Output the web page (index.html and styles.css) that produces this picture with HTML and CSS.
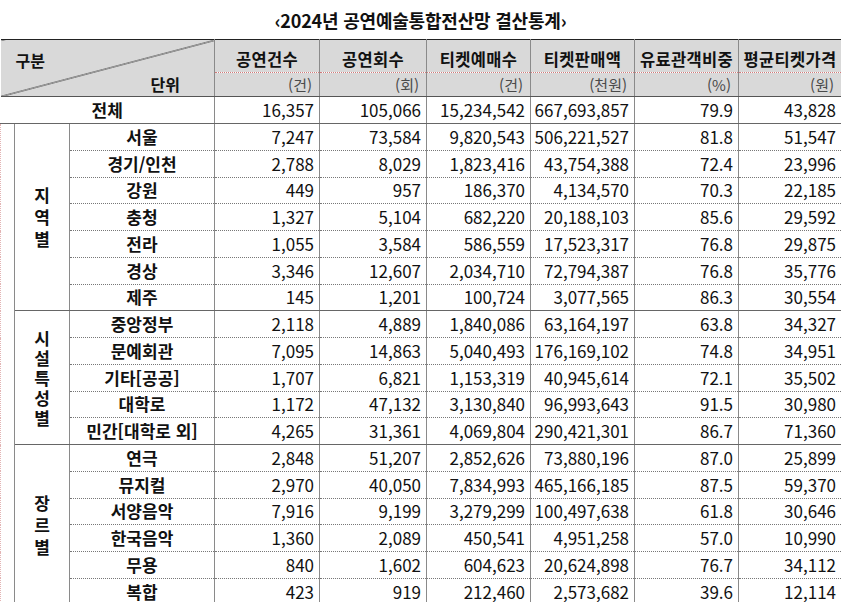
FILE: index.html
```html
<!DOCTYPE html>
<html lang="ko">
<head>
<meta charset="utf-8">
<title>2024년 공연예술통합전산망 결산통계</title>
<link rel="stylesheet" href="styles.css">
</head>
<body>
<div class="page">
  <h1 class="title">‹2024년 공연예술통합전산망 결산통계›</h1>
  <table class="stats">
    <colgroup>
      <col class="c-sliver"><col class="c-group"><col class="c-item">
      <col class="c-d1"><col class="c-d2"><col class="c-d3"><col class="c-d4"><col class="c-d5"><col class="c-d6">
    </colgroup>
    <thead>
      <tr class="h1">
        <td class="corner" colspan="3" rowspan="2">
          <div class="corner-in"><span class="gubun">구분</span><span class="danwi">단위</span></div>
        </td>
        <th>공연건수</th><th>공연회수</th><th>티켓예매수</th><th>티켓판매액</th><th>유료관객비중</th><th>평균티켓가격</th>
      </tr>
      <tr class="h2">
        <td class="unit">(건)</td><td class="unit">(회)</td><td class="unit">(건)</td><td class="unit">(천원)</td><td class="unit">(%)</td><td class="unit">(원)</td>
      </tr>
    </thead>
    <tbody>
      <tr class="total">
        <td class="total-label" colspan="3">전체</td>
        <td>16,357</td><td>105,066</td><td>15,234,542</td><td>667,693,857</td><td>79.9</td><td>43,828</td>
      </tr>
      <tr>
        <td class="sliver" rowspan="18"></td>
        <td class="group" rowspan="7">지<br>역<br>별</td>
        <td class="item">서울</td><td>7,247</td><td>73,584</td><td>9,820,543</td><td>506,221,527</td><td>81.8</td><td>51,547</td>
      </tr>
      <tr><td class="item">경기/인천</td><td>2,788</td><td>8,029</td><td>1,823,416</td><td>43,754,388</td><td>72.4</td><td>23,996</td></tr>
      <tr><td class="item">강원</td><td>449</td><td>957</td><td>186,370</td><td>4,134,570</td><td>70.3</td><td>22,185</td></tr>
      <tr><td class="item">충청</td><td>1,327</td><td>5,104</td><td>682,220</td><td>20,188,103</td><td>85.6</td><td>29,592</td></tr>
      <tr><td class="item">전라</td><td>1,055</td><td>3,584</td><td>586,559</td><td>17,523,317</td><td>76.8</td><td>29,875</td></tr>
      <tr><td class="item">경상</td><td>3,346</td><td>12,607</td><td>2,034,710</td><td>72,794,387</td><td>76.8</td><td>35,776</td></tr>
      <tr class="last"><td class="item">제주</td><td>145</td><td>1,201</td><td>100,724</td><td>3,077,565</td><td>86.3</td><td>30,554</td></tr>
      <tr>
        <td class="group tight" rowspan="5">시<br>설<br>특<br>성<br>별</td>
        <td class="item">중앙정부</td><td>2,118</td><td>4,889</td><td>1,840,086</td><td>63,164,197</td><td>63.8</td><td>34,327</td>
      </tr>
      <tr><td class="item">문예회관</td><td>7,095</td><td>14,863</td><td>5,040,493</td><td>176,169,102</td><td>74.8</td><td>34,951</td></tr>
      <tr><td class="item">기타[공공]</td><td>1,707</td><td>6,821</td><td>1,153,319</td><td>40,945,614</td><td>72.1</td><td>35,502</td></tr>
      <tr><td class="item">대학로</td><td>1,172</td><td>47,132</td><td>3,130,840</td><td>96,993,643</td><td>91.5</td><td>30,980</td></tr>
      <tr class="last"><td class="item">민간[대학로 외]</td><td>4,265</td><td>31,361</td><td>4,069,804</td><td>290,421,301</td><td>86.7</td><td>71,360</td></tr>
      <tr>
        <td class="group" rowspan="6">장<br>르<br>별</td>
        <td class="item">연극</td><td>2,848</td><td>51,207</td><td>2,852,626</td><td>73,880,196</td><td>87.0</td><td>25,899</td>
      </tr>
      <tr><td class="item">뮤지컬</td><td>2,970</td><td>40,050</td><td>7,834,993</td><td>465,166,185</td><td>87.5</td><td>59,370</td></tr>
      <tr><td class="item">서양음악</td><td>7,916</td><td>9,199</td><td>3,279,299</td><td>100,497,638</td><td>61.8</td><td>30,646</td></tr>
      <tr><td class="item">한국음악</td><td>1,360</td><td>2,089</td><td>450,541</td><td>4,951,258</td><td>57.0</td><td>10,990</td></tr>
      <tr><td class="item">무용</td><td>840</td><td>1,602</td><td>604,623</td><td>20,624,898</td><td>76.7</td><td>34,112</td></tr>
      <tr class="last"><td class="item">복합</td><td>423</td><td>919</td><td>212,460</td><td>2,573,682</td><td>39.6</td><td>12,114</td></tr>
    </tbody>
  </table>
</div>
</body>
</html>
```

FILE: styles.css
```css
html, body {
  margin: 0;
  padding: 0;
  background: #ffffff;
}

.page {
  width: 841px;
  height: 602px;
  overflow: hidden;
  font-family: "Noto Sans CJK KR", "Noto Sans", sans-serif;
  color: #111;
}

.title {
  margin: 0;
  height: 39px;
  display: flex;
  align-items: center;
  justify-content: center;
  font-size: 18px;
  font-weight: 700;
  color: #111;
  letter-spacing: -0.2px;
}

.stats {
  border-collapse: collapse;
  table-layout: fixed;
  width: 841px;
}

.c-sliver { width: 14px; }
.c-group { width: 55px; }
.c-item { width: 145px; }
.c-d1 { width: 105px; }
.c-d2 { width: 107px; }
.c-d3 { width: 104px; }
.c-d4 { width: 104px; }
.c-d5 { width: 104px; }
.c-d6 { width: 103px; }

.stats td, .stats th {
  padding: 0 5px 0 0;
  border-left: 1px solid #8a8a8a;
  border-right: 1px solid #8a8a8a;
  text-align: right;
  vertical-align: middle;
  font-size: 17px;
  line-height: 20px;
  white-space: nowrap;
  overflow: hidden;
}

/* header */
.stats thead tr.h1 { height: 33px; }
.stats thead tr.h2 { height: 24px; }

.stats thead th, .stats thead td {
  background: #d9d9d9;
}

.stats tr.h1 th, .stats tr.h1 td {
  border-top: 1px solid #222;
}

.stats th {
  text-align: center;
  font-weight: 700;
  font-size: 16.5px;
  padding: 5px 0 0 0;
  color: #111;
  border-bottom: 1px dotted #d07a7a;
  letter-spacing: 0.3px;
}

.stats td.unit {
  font-size: 15px;
  color: #4a4a4a;
  padding-right: 7px;
  border-bottom: 1px solid #555;
}

.stats td.corner {
  padding: 0;
  border-left: none;
  border-bottom: 1px solid #555;
  background:
    linear-gradient(to bottom right, transparent calc(50% - 0.8px), #333 50%, transparent calc(50% + 0.8px)),
    #d9d9d9;
}

.corner-in {
  height: 56px;
  display: flex;
  flex-direction: column;
  justify-content: space-between;
  font-weight: 700;
  font-size: 16px;
}

.gubun {
  align-self: flex-start;
  padding: 10px 0 0 15px;
  line-height: 20px;
}

.danwi {
  align-self: flex-end;
  padding: 0 34px 2px 0;
  line-height: 20px;
}

/* total */
.stats tr.total { height: 27px; }
.stats tr.total td {
  border-bottom: 1px solid #666;
}
.stats td.total-label {
  text-align: center;
  font-weight: 700;
  font-size: 17px;
  padding: 0;
  border-left: none;
}

/* body rows */
.stats tbody tr { height: 26.75px; }

.stats tbody td {
  border-bottom: 1px dotted #777;
}

.stats tbody tr.last td {
  border-bottom: 1px solid #666;
}

.stats td.sliver {
  padding: 0;
  border-left: 1px dotted #e3b4b4;
  border-top: 1px dotted #d08a8a;
  border-bottom: none;
  border-right: 1px solid #8a8a8a;
}

.stats td.group {
  text-align: center;
  padding: 0;
  font-weight: 700;
  font-size: 17px;
  line-height: 22px;
  border-bottom: 1px solid #666;
}

.stats td.group.tight {
  line-height: 20px;
}

.stats td.item {
  text-align: center;
  padding: 0;
  font-weight: 700;
  font-size: 17px;
}
```
